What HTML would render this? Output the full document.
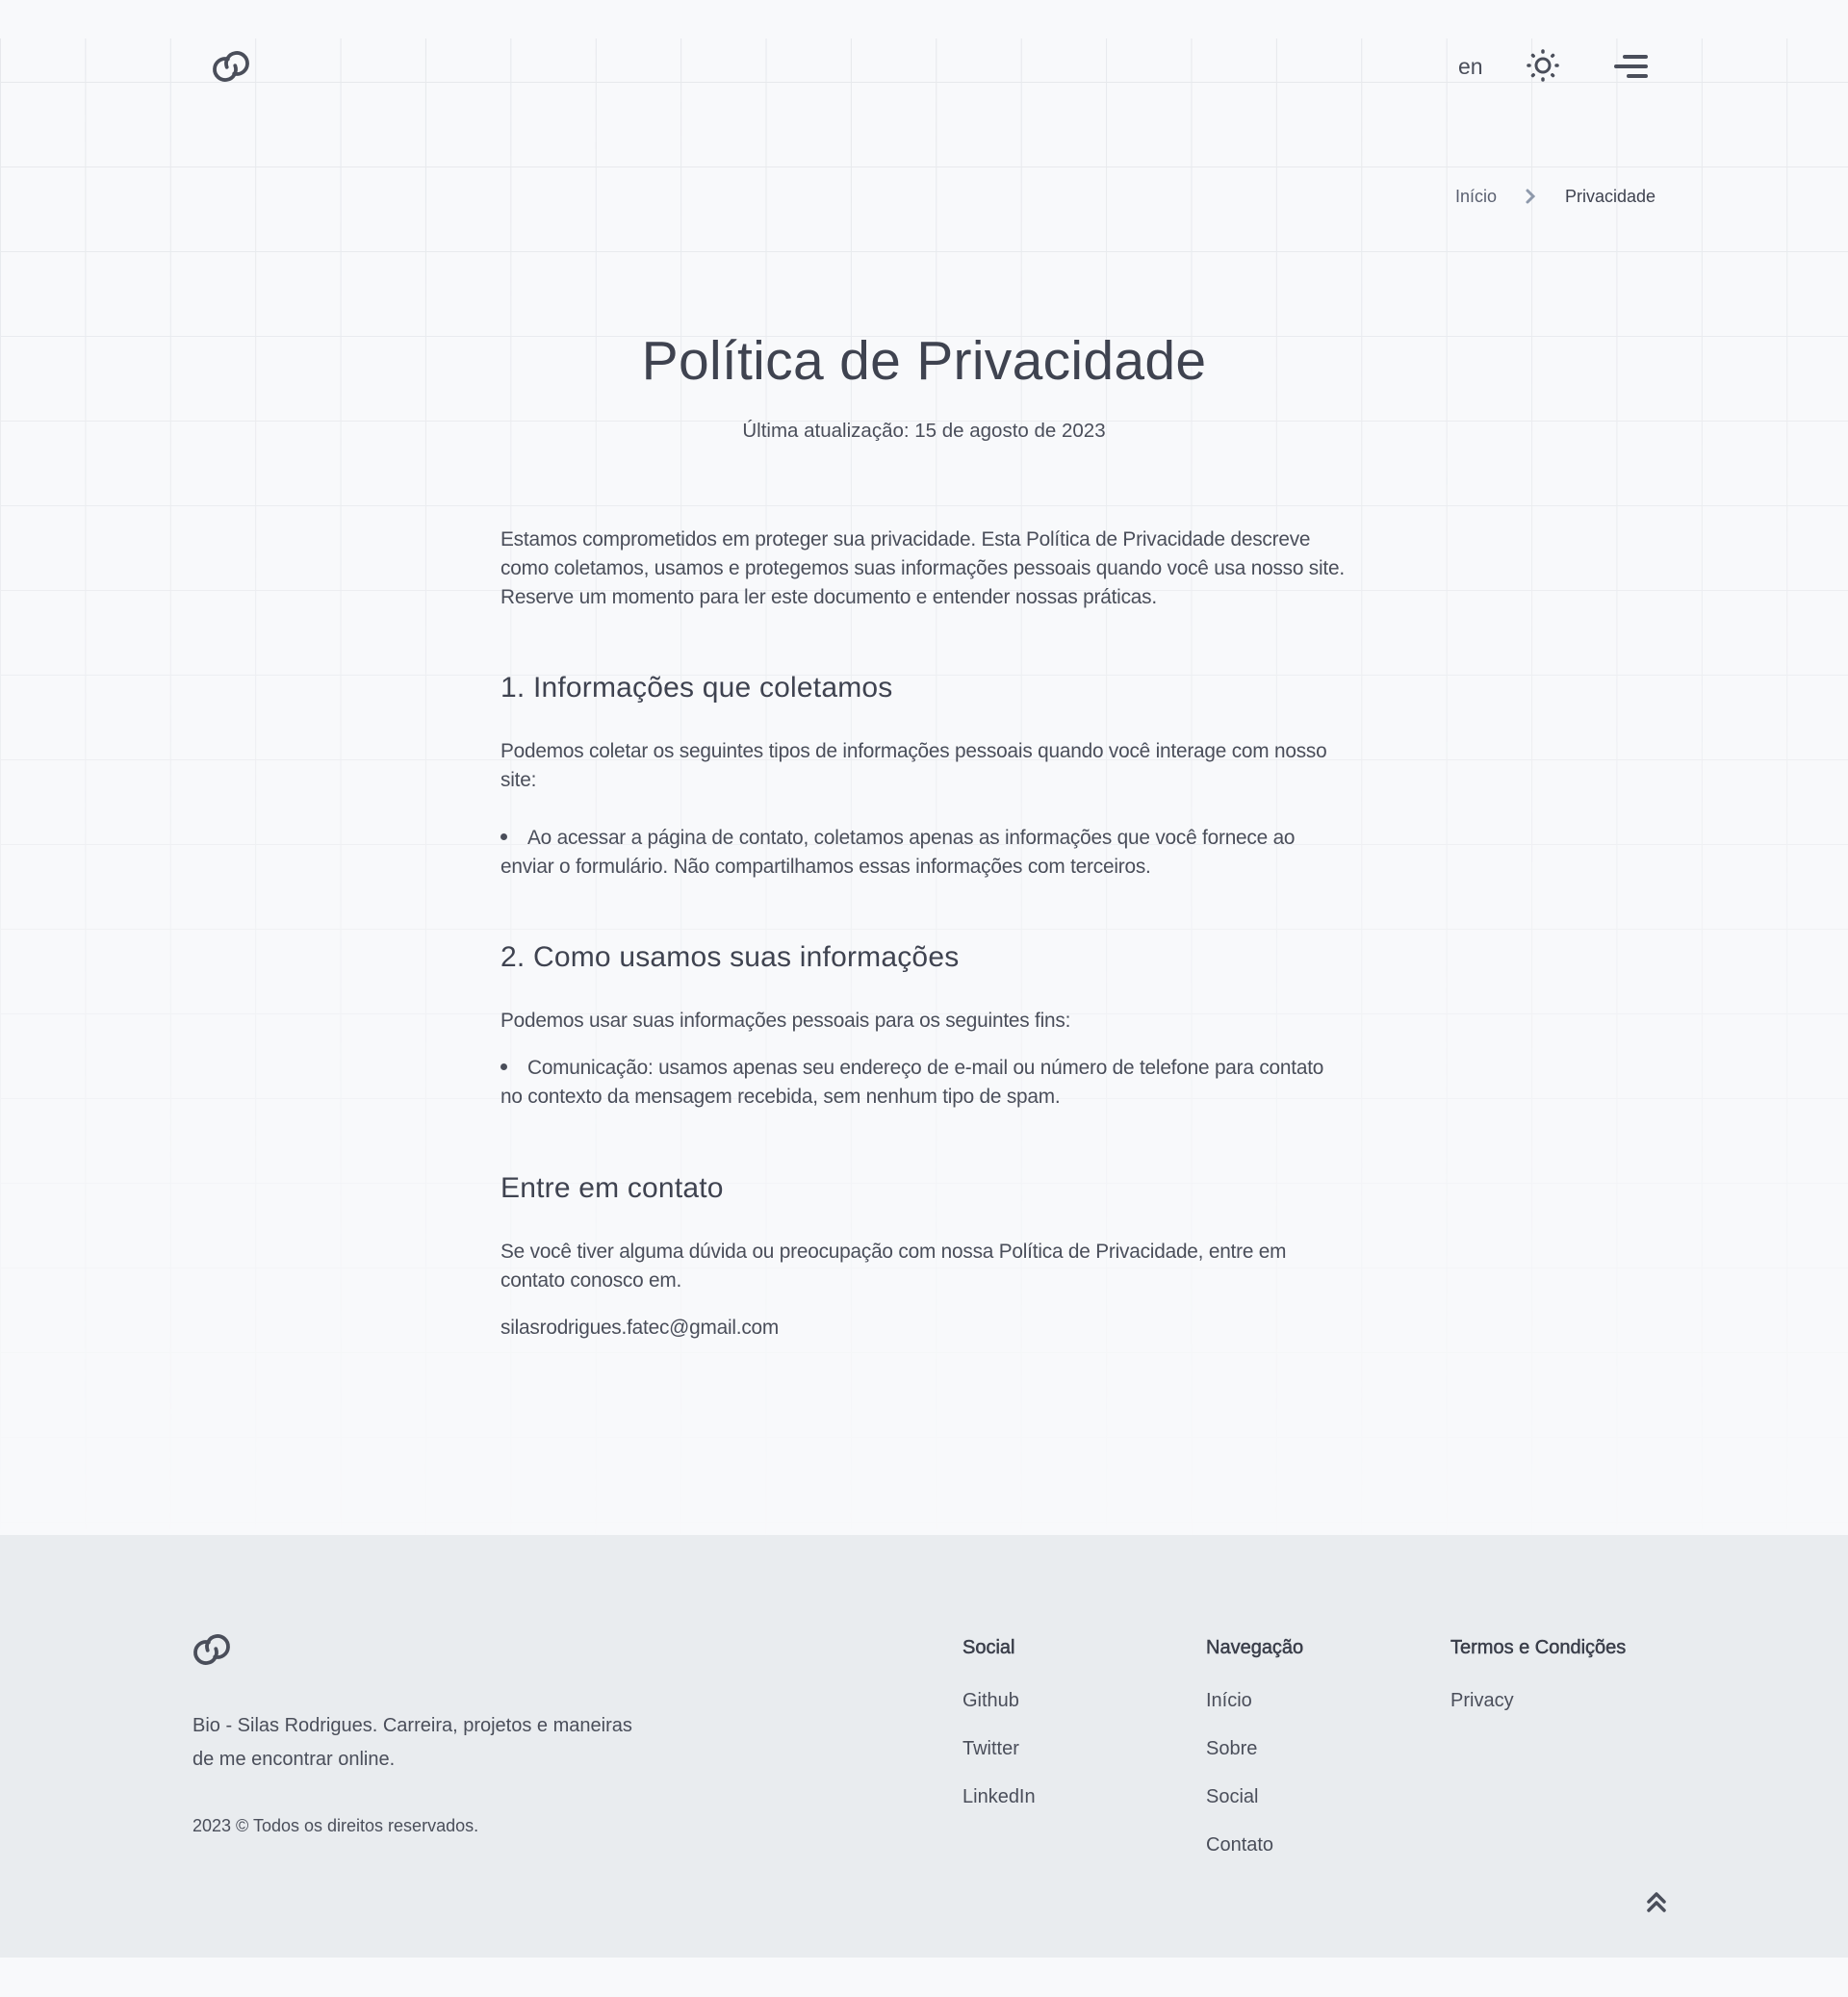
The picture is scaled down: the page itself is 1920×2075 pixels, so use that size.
<!DOCTYPE html>
<html><head><meta charset="utf-8"><style>
*{margin:0;padding:0;box-sizing:border-box}
body{width:1920px;height:2075px;background:#f8f9fb;font-family:"Liberation Sans",sans-serif;color:#4a4e5a;position:relative;overflow:hidden}
.grid{position:absolute;left:0;top:40px;width:1920px;height:1580px;
background-image:linear-gradient(to right,#e6e8ec 1px,transparent 1px),linear-gradient(to bottom,#e6e8ec 1px,transparent 1px);
background-size:88.4px 88px;background-position:0 -43px;
-webkit-mask-image:linear-gradient(to bottom,#000 0%,rgba(0,0,0,.6) 45%,transparent 100%);}
.a{position:absolute;white-space:nowrap}
p.a{font-size:20.8px;line-height:30px;letter-spacing:-0.2px;color:#4a4e5a}
h2.a{font-size:30px;font-weight:normal;color:#3f4350;letter-spacing:0.2px}
.footer{position:absolute;left:0;top:1595px;width:1920px;height:439px;background:#e9ecef}
.fh{font-size:20px;color:#3a3e4a;font-weight:normal;-webkit-text-stroke:0.5px #3a3e4a}
.fl{font-size:20px;color:#4a4e5a}
.dot{display:inline-block;width:7px;height:7px;border-radius:50%;background:#4a4e5a;margin-right:21px;vertical-align:middle;position:relative;top:-2px}
</style></head><body>
<div class="grid"></div>

<svg class="a" style="left:218px;top:52px" width="44" height="36" viewBox="0 0 44 36" fill="none" stroke="#4a4e5a" stroke-width="3.8" stroke-linecap="round">
<path d="M18.8 9.4A11 11 0 1 0 26.3 16.2"/><path d="M17.7 17.8A11 11 0 1 1 25.2 24.6"/>
</svg>
<div class="a" style="left:1515px;top:56px;font-size:23px;color:#4a4e5a">en</div>
<svg class="a" style="left:1585px;top:50px" width="36" height="36" viewBox="0 0 36 36" fill="none" stroke="#4a4e5a" stroke-linecap="round">
<circle cx="18" cy="18" r="7" stroke-width="3"/>
<g stroke-width="3.5"><path d="M18 3v1M18 32v1M3 18h1M32 18h1M7.5 7.5l.7.7M27.8 27.8l.7.7M7.5 28.5l.7-.7M27.8 8.2l.7-.7"/></g>
</svg>
<svg class="a" style="left:1677px;top:56px" width="36" height="28" viewBox="0 0 36 28" stroke="#4a4e5a" stroke-width="4" stroke-linecap="round">
<path d="M11 3h22M2 13h31M15 23h18"/>
</svg>

<div class="a" style="left:1512px;top:194px;font-size:18px;color:#5a6070">Início</div>
<svg class="a" style="left:1584px;top:195px" width="12" height="18" viewBox="0 0 12 18" fill="none" stroke="#8e99ab" stroke-width="3" stroke-linecap="round"><path d="M3 3l6 6-6 6"/></svg>
<div class="a" style="left:1626px;top:194px;font-size:18px;color:#3f4350">Privacidade</div>

<h1 class="a" style="left:0;width:1920px;text-align:center;top:342px;font-size:57px;font-weight:normal;color:#3f4350;letter-spacing:0.3px">Política de Privacidade</h1>
<div class="a" style="left:0;width:1920px;text-align:center;top:436px;font-size:20.5px;color:#4a4e5a">Última atualização: 15 de agosto de 2023</div>

<p class="a" style="left:520px;top:546px">Estamos comprometidos em proteger sua privacidade. Esta Política de Privacidade descreve<br>como coletamos, usamos e protegemos suas informações pessoais quando você usa nosso site.<br>Reserve um momento para ler este documento e entender nossas práticas.</p>

<h2 class="a" style="left:520px;top:698px">1. Informações que coletamos</h2>
<p class="a" style="left:520px;top:766px">Podemos coletar os seguintes tipos de informações pessoais quando você interage com nosso<br>site:</p>
<p class="a" style="left:520px;top:856px"><span class="dot"></span>Ao acessar a página de contato, coletamos apenas as informações que você fornece ao<br>enviar o formulário. Não compartilhamos essas informações com terceiros.</p>

<h2 class="a" style="left:520px;top:978px">2. Como usamos suas informações</h2>
<p class="a" style="left:520px;top:1046px">Podemos usar suas informações pessoais para os seguintes fins:</p>
<p class="a" style="left:520px;top:1095px"><span class="dot"></span>Comunicação: usamos apenas seu endereço de e-mail ou número de telefone para contato<br>no contexto da mensagem recebida, sem nenhum tipo de spam.</p>

<h2 class="a" style="left:520px;top:1218px">Entre em contato</h2>
<p class="a" style="left:520px;top:1286px">Se você tiver alguma dúvida ou preocupação com nossa Política de Privacidade, entre em<br>contato conosco em.</p>
<p class="a" style="left:520px;top:1365px">silasrodrigues.fatec@gmail.com</p>

<div class="footer"></div>
<svg class="a" style="left:198px;top:1697px" width="44" height="36" viewBox="0 0 44 36" fill="none" stroke="#4a4e5a" stroke-width="3.8" stroke-linecap="round">
<path d="M18.8 9.4A11 11 0 1 0 26.3 16.2"/><path d="M17.7 17.8A11 11 0 1 1 25.2 24.6"/>
</svg>
<div class="a fl" style="left:200px;top:1776px;line-height:35px">Bio - Silas Rodrigues. Carreira, projetos e maneiras<br>de me encontrar online.</div>
<div class="a" style="left:200px;top:1887px;font-size:18px;color:#4a4e5a">2023 © Todos os direitos reservados.</div>

<div class="a fh" style="left:1000px;top:1701px">Social</div>
<div class="a fl" style="left:1000px;top:1756px">Github</div>
<div class="a fl" style="left:1000px;top:1806px">Twitter</div>
<div class="a fl" style="left:1000px;top:1856px">LinkedIn</div>

<div class="a fh" style="left:1253px;top:1701px">Navegação</div>
<div class="a fl" style="left:1253px;top:1756px">Início</div>
<div class="a fl" style="left:1253px;top:1806px">Sobre</div>
<div class="a fl" style="left:1253px;top:1856px">Social</div>
<div class="a fl" style="left:1253px;top:1906px">Contato</div>

<div class="a fh" style="left:1507px;top:1701px">Termos e Condições</div>
<div class="a fl" style="left:1507px;top:1756px">Privacy</div>

<svg class="a" style="left:1708px;top:1964px" width="26" height="26" viewBox="0 0 26 26" fill="none" stroke="#4a4e5a" stroke-width="3.5" stroke-linecap="round" stroke-linejoin="round"><path d="M5 12l8-8 8 8M5 21l8-8 8 8"/></svg>
</body></html>
